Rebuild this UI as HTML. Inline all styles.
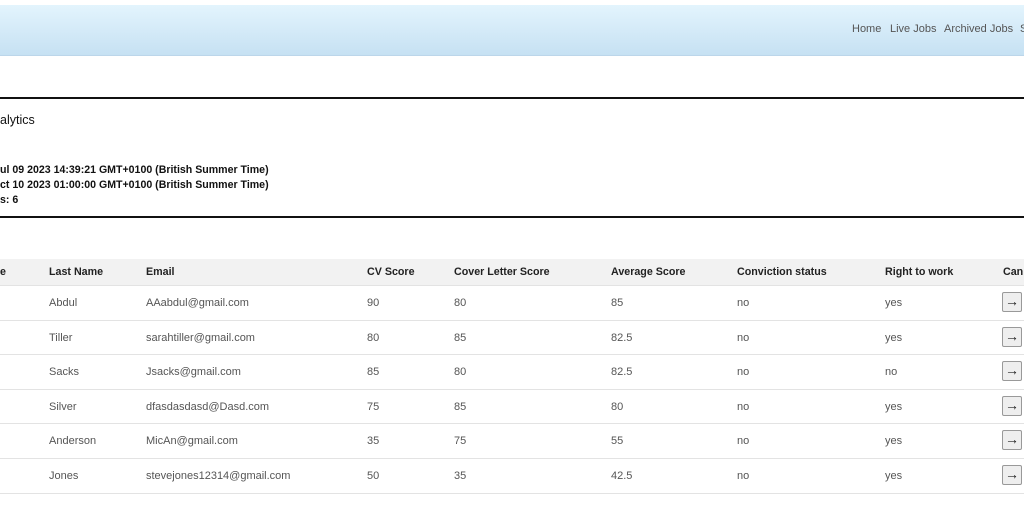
<!DOCTYPE html>
<html><head><style>
body{margin:0;width:1024px;height:512px;overflow:hidden;background:#fff;font-family:"Liberation Sans",Arial,sans-serif;position:relative}
.nav{position:absolute;left:0;top:5px;width:1024px;height:50px;background:linear-gradient(#e3f4fd,#c6e1f3);border-bottom:1px solid #bcd6ea}
.nav span{position:absolute;top:18px;font-size:11px;color:#555}
.hr{position:absolute;left:0;width:1024px;height:2px;background:#111}
.t{position:absolute;font-size:10.6px;color:#111}
.b{font-weight:bold}
.th{position:absolute;left:0;top:259px;width:1024px;height:26px;background:#f2f2f2}
.h{position:absolute;font-size:10.7px;font-weight:bold;color:#222;top:266px}
.c{position:absolute;font-size:11px;color:#555}
.sep{position:absolute;left:0;width:1024px;height:1px;background:#e3e3e3}
.btn{position:absolute;left:1002px;width:18px;height:18px;border:1px solid #999;border-radius:2px;background:#eee;font-size:14px;line-height:17px;text-align:center;color:#222}
</style></head><body>
<div class="nav"><span style="left:852px">Home</span><span style="left:890px">Live Jobs</span><span style="left:944px">Archived Jobs</span><span style="left:1020px">S</span></div>
<div class="hr" style="top:97px"></div>
<div class="t" style="left:0;top:113px;font-size:12.5px;color:#111">alytics</div>
<div class="t b" style="left:0;top:164px">ul 09 2023 14:39:21 GMT+0100 (British Summer Time)</div>
<div class="t b" style="left:0;top:179px">ct 10 2023 01:00:00 GMT+0100 (British Summer Time)</div>
<div class="t b" style="left:0;top:194px">s: 6</div>
<div class="hr" style="top:216px"></div>
<div class="th"></div>
<div class="h" style="left:0">e</div><div class="h" style="left:49px">Last Name</div><div class="h" style="left:146px">Email</div><div class="h" style="left:367px">CV Score</div><div class="h" style="left:454px">Cover Letter Score</div><div class="h" style="left:611px">Average Score</div><div class="h" style="left:737px">Conviction status</div><div class="h" style="left:885px">Right to work</div><div class="h" style="left:1003px">Can</div>
<div id="rows"></div>
<script>
var d=[["Abdul","AAabdul@gmail.com","90","80","85","no","yes"],["Tiller","sarahtiller@gmail.com","80","85","82.5","no","yes"],["Sacks","Jsacks@gmail.com","85","80","82.5","no","no"],["Silver","dfasdasdasd@Dasd.com","75","85","80","no","yes"],["Anderson","MicAn@gmail.com","35","75","55","no","yes"],["Jones","stevejones12314@gmail.com","50","35","42.5","no","yes"]];
var x=[49,146,367,454,611,737,885],h="";
d.forEach(function(r,i){var y=285+i*34.6;h+='<div class="sep" style="top:'+Math.round(y)+'px"></div>';r.forEach(function(v,j){h+='<div class="c" style="left:'+x[j]+'px;top:'+Math.round(y+12)+'px">'+v+'</div>'});h+='<div class="btn" style="top:'+Math.round(y+7)+'px">&rarr;</div>'});
h+='<div class="sep" style="top:493px"></div>';
document.getElementById("rows").innerHTML=h;
</script>
</body></html>
